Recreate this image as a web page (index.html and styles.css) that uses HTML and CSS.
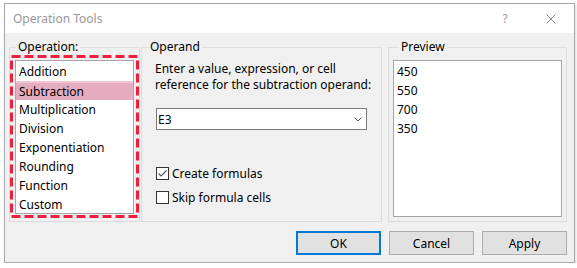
FILE: index.html
```html
<!DOCTYPE html>
<html lang="en">
<head>
    <meta charset="UTF-8">
    <title>Operation Tools</title>
    <link rel="stylesheet" href="styles.css">
</head>
<body>
    <div class="window">
        <div class="titlebar">
            <span class="title">Operation Tools</span>
            <span class="caption-btn help">?</span>
            <span class="caption-btn close">
                <svg width="10" height="10" viewBox="0 0 10 10">
                    <path d="M0.5 0.5 L9.5 9.5 M9.5 0.5 L0.5 9.5" stroke="#888" stroke-width="1" fill="none"/>
                </svg>
            </span>
        </div>

        <div class="content">
            <div class="groups">
                <fieldset class="group group-operation">
                    <legend>Operation:</legend>
                    <div class="marker">
                        <ul class="listbox">
                            <li>Addition</li>
                            <li class="selected">Subtraction</li>
                            <li>Multiplication</li>
                            <li>Division</li>
                            <li>Exponentiation</li>
                            <li>Rounding</li>
                            <li>Function</li>
                            <li>Custom</li>
                        </ul>
                        <!-- red dashed annotation drawn over the list -->
                        <svg class="marker-outline" width="129" height="163" viewBox="0 0 129 163">
                            <rect x="1.5" y="1.5" width="126" height="160" fill="none" stroke="#ec1f3f" stroke-width="3" stroke-dasharray="9 4"/>
                        </svg>
                    </div>
                </fieldset>

                <fieldset class="group group-operand">
                    <legend>Operand</legend>
                    <div class="operand-body">
                        <p class="hint">Enter a value, expression, or cell<br>reference for the subtraction operand:</p>
                        <div class="combo">
                            <span>E3</span>
                            <svg width="8" height="5" viewBox="0 0 8 5">
                                <path d="M0.5 0.5 L4 4 L7.5 0.5" stroke="#555" stroke-width="1" fill="none"/>
                            </svg>
                        </div>
                        <label class="check first">
                            <span class="box">
                                <svg width="11" height="11" viewBox="0 0 11 11">
                                    <path d="M1.5 5.5 L4 8 L9.5 2.5" stroke="#555" stroke-width="1.1" fill="none"/>
                                </svg>
                            </span>
                            Create formulas
                        </label>
                        <label class="check">
                            <span class="box"></span>
                            Skip formula cells
                        </label>
                    </div>
                </fieldset>

                <fieldset class="group group-preview">
                    <legend>Preview</legend>
                    <ul class="listbox preview-list">
                        <li>450</li>
                        <li>550</li>
                        <li>700</li>
                        <li>350</li>
                    </ul>
                </fieldset>
            </div>

            <div class="buttons">
                <button class="btn default">OK</button>
                <button class="btn">Cancel</button>
                <button class="btn">Apply</button>
            </div>
        </div>
    </div>
</body>
</html>
```

FILE: styles.css
```css
body {
    margin: 0;
    background: #ffffff;
    font-family: 'Noto Sans', 'Open Sans', sans-serif;
    font-size: 12px;
    color: #000;
}

.window {
    margin: 3px 0 0 4px;
    width: 571px;
    height: 260px;
    box-sizing: border-box;
    border: 1px solid #a8a8a8;
    box-shadow: 1px 1px 3px rgba(0, 0, 0, 0.15);
    display: flex;
    flex-direction: column;
    background: #f0f0f0;
}

.titlebar {
    height: 29px;
    background: #ffffff;
    display: flex;
    align-items: center;
    padding-left: 8px;
}

.title {
    color: #999;
    flex: 1;
}

.caption-btn {
    width: 46px;
    height: 29px;
    display: flex;
    align-items: center;
    justify-content: center;
    color: #999;
}

.content {
    flex: 1;
    display: flex;
    flex-direction: column;
    padding: 6px 7px 7px 4px;
    gap: 9px;
}

.groups {
    height: 183px;
    display: flex;
}

.group {
    margin: 0;
    padding: 0;
    border: 1px solid #dcdcdc;
    box-sizing: border-box;
    min-width: 0;
    display: flex;
    flex-direction: column;
}

.group legend {
    margin-left: 6px;
    padding: 0 2px;
    line-height: 16px;
}

.group-operation {
    width: 131px;
}

.group-operand {
    width: 241px;
    margin-left: 1px;
}

.group-preview {
    width: 179px;
    margin-left: 6px;
    padding: 5px 4px 4px 4px;
}

.marker {
    position: relative;
    width: 129px;
    height: 163px;
    box-sizing: border-box;
    padding: 5px 5px 4px 5px;
}

.marker-outline {
    position: absolute;
    left: 0;
    top: 0;
}

.listbox {
    list-style: none;
    margin: 0;
    padding: 1px 0 0 0;
    background: #ffffff;
    border: 1px solid #a5a5a5;
    height: 154px;
    box-sizing: border-box;
}

.listbox li {
    height: 19px;
    line-height: 19px;
    padding-left: 3px;
    white-space: nowrap;
}

.listbox li.selected {
    background: #e5adbf;
    border-top: 2px solid #efc6d2;
    height: 17px;
    line-height: 17px;
}

.preview-list {
    flex: 1;
    height: auto;
}

.operand-body {
    padding: 6px 14px 0 14px;
}

.hint {
    margin: 0 0 0 -1px;
    line-height: 16px;
    white-space: nowrap;
}

.combo {
    margin-top: 15px;
    height: 22px;
    box-sizing: border-box;
    border: 1px solid #7a7a7a;
    background: #ffffff;
    display: flex;
    align-items: center;
    justify-content: space-between;
    padding: 0 4px 0 1px;
}

.check {
    display: flex;
    align-items: center;
    gap: 3px;
    height: 13px;
    margin-top: 11px;
    white-space: nowrap;
}

.check.first {
    margin-top: 37px;
}

.box {
    width: 13px;
    height: 13px;
    box-sizing: border-box;
    border: 1px solid #333;
    background: #ffffff;
    display: flex;
    align-items: center;
    justify-content: center;
}

.buttons {
    display: flex;
    justify-content: flex-end;
    gap: 8px;
}

.btn {
    width: 85px;
    height: 24px;
    box-sizing: border-box;
    border: 1px solid #adadad;
    background: #e1e1e1;
    font-family: inherit;
    font-size: 12px;
    color: #000;
    padding: 0;
}

.btn.default {
    border: 2px solid #0078d7;
}
```
